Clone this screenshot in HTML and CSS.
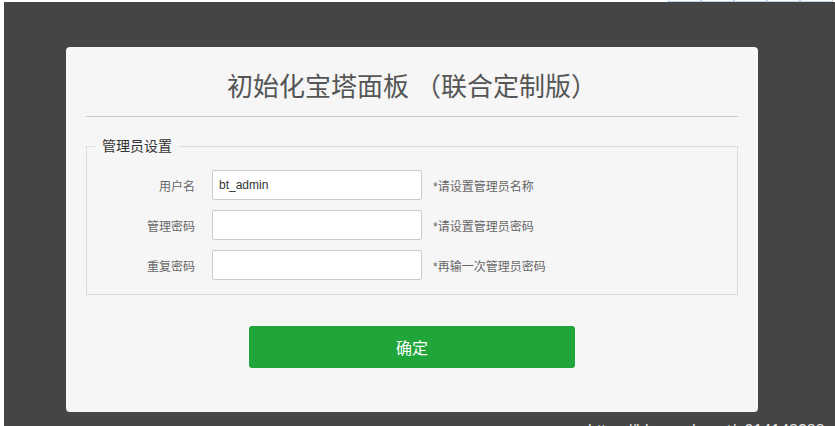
FILE: index.html
```html
<!DOCTYPE html>
<html lang="zh-CN">
<head>
    <meta charset="UTF-8">
    <meta name="viewport" content="width=device-width, initial-scale=1.0">
    <title>初始化宝塔面板</title>
    <link rel="stylesheet" href="styles.css">
</head>
<body>
    <div class="top-cells">
        <span></span><span></span><span></span><span></span><span></span>
    </div>
    <div class="mask">
        <div class="card">
            <h1 class="title">初始化宝塔面板 （联合定制版）</h1>
            <form action="#">
                <fieldset class="group">
                    <legend>管理员设置</legend>
                    <div class="row">
                        <label>用户名</label>
                        <input type="text" value="bt_admin">
                        <span class="hint">*请设置管理员名称</span>
                    </div>
                    <div class="row">
                        <label>管理密码</label>
                        <input type="password">
                        <span class="hint">*请设置管理员密码</span>
                    </div>
                    <div class="row">
                        <label>重复密码</label>
                        <input type="password">
                        <span class="hint">*再输一次管理员密码</span>
                    </div>
                </fieldset>
                <button type="submit" class="btn">确定</button>
            </form>
        </div>
    </div>
    <div class="watermark">https://blog.csdn.net/u014148288</div>
</body>
</html>
```

FILE: styles.css
```css
* {
    margin: 0;
    padding: 0;
    box-sizing: border-box;
    font-family: 'Liberation Sans', 'Noto Sans CJK SC', sans-serif;
}

body {
    background-color: #fff;
    height: 426px;
    overflow: hidden;
    position: relative;
}

.mask {
    margin: 2px 0 0 4px;
    height: 440px;
    background-color: #454545;
    padding: 45px 0 0 62px;
}

.card {
    width: 692px;
    background-color: #f6f6f6;
    border-radius: 4px;
    padding: 20px 20px 44px;
}

.title {
    font-family: 'Noto Sans CJK SC', sans-serif;
    font-size: 26px;
    font-weight: normal;
    line-height: 36px;
    color: #555;
    text-align: center;
    padding-bottom: 13px;
    border-bottom: 1px solid #c8c8c8;
}

.group {
    margin-top: 19px;
    border: 1px solid #dcdcdc;
    padding: 14px 8px 14px;
}

.group legend {
    font-size: 14px;
    line-height: 20px;
    color: #333;
    padding: 0 7px;
}

.row {
    display: flex;
    align-items: center;
    height: 30px;
    margin-bottom: 10px;
}

.row:last-child {
    margin-bottom: 0;
}

.row label {
    width: 100px;
    text-align: right;
    font-size: 12px;
    color: #666;
    margin-right: 17px;
}

.row input {
    width: 210px;
    height: 30px;
    border: 1px solid #ccc;
    border-radius: 2px;
    background-color: #fff;
    padding: 0 6px;
    font-size: 12px;
    color: #333;
    outline: none;
}

.hint {
    margin-left: 11px;
    font-size: 12px;
    color: #666;
}

.btn {
    display: block;
    width: 326px;
    height: 42px;
    margin: 31px auto 0;
    background-color: #20a53a;
    border: none;
    border-radius: 3px;
    color: #fff;
    font-size: 16px;
    cursor: pointer;
}

.btn:hover {
    background-color: #10952a;
}

/* stray bits of the page behind the mask */
.top-cells {
    position: absolute;
    top: 0;
    right: 2px;
    display: flex;
    height: 2px;
}

.top-cells span {
    width: 33px;
    height: 2px;
    border: 1px solid #b9d3ee;
    border-top: none;
    background-color: #fff;
}

.watermark {
    position: absolute;
    left: 588px;
    top: 422px;
    font-size: 16px;
    color: #e6e6e6;
    white-space: nowrap;
}
```
